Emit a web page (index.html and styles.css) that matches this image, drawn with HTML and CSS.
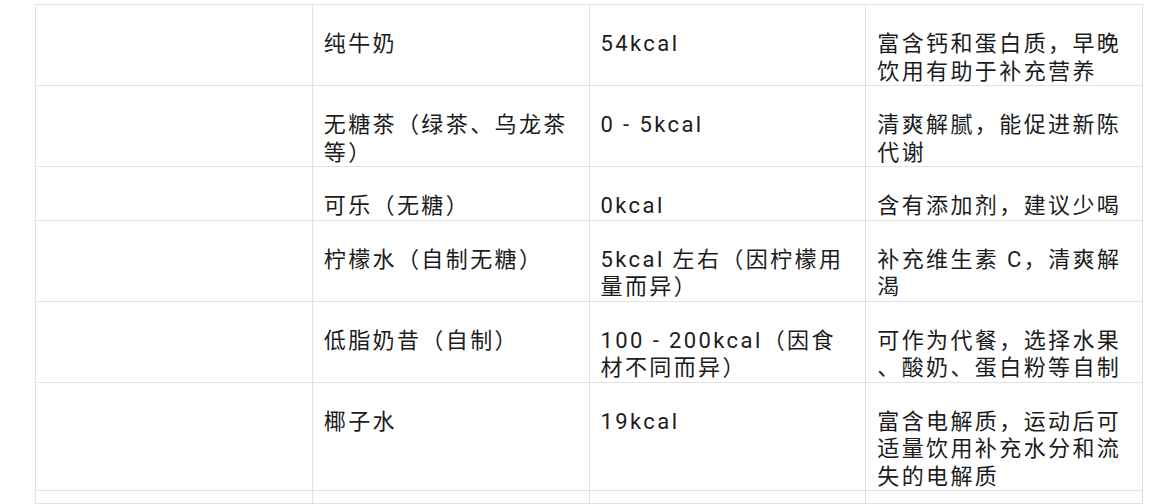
FILE: index.html
```html
<!DOCTYPE html>
<html lang="zh-CN">
<head>
<meta charset="utf-8">
<title>饮品热量表</title>
<link rel="stylesheet" href="styles.css">
</head>
<body>
<div class="wrap">
<table class="drinks">
<colgroup><col><col><col><col></colgroup>
<tbody>
<tr><td></td><td>纯牛奶</td><td>54kcal</td><td>富含钙和蛋白质，早晚饮用有助于补充营养</td></tr>
<tr><td></td><td>无糖茶（绿茶、乌龙茶等）</td><td>0 - 5kcal</td><td>清爽解腻，能促进新陈代谢</td></tr>
<tr><td></td><td>可乐（无糖）</td><td>0kcal</td><td>含有添加剂，建议少喝</td></tr>
<tr><td></td><td>柠檬水（自制无糖）</td><td>5kcal 左右（因柠檬用量而异）</td><td>补充维生素 C，清爽解渴</td></tr>
<tr><td></td><td>低脂奶昔（自制）</td><td>100 - 200kcal（因食材不同而异）</td><td>可作为代餐，选择水果、酸奶、蛋白粉等自制</td></tr>
<tr><td></td><td>椰子水</td><td>19kcal</td><td>富含电解质，运动后可适量饮用补充水分和流失的电解质</td></tr>
<tr class="tail"><td></td><td></td><td></td><td></td></tr>
</tbody>
</table>
</div>
</body>
</html>
```
FILE: styles.css
```css
html, body {
  margin: 0;
  padding: 0;
  background: #ffffff;
}
body {
  font-family: Roboto, "Noto Sans CJK SC", sans-serif;
  color: #1c1c1c;
  overflow: hidden;
  height: 504px;
}
.wrap {
  padding: 4px 0 0 35px;
}
.drinks {
  border-collapse: collapse;
  table-layout: fixed;
  width: 1108px;
}
.drinks td {
  border: 1px solid #e2e2e2;
  padding: 25px 13px 0 11px;
  vertical-align: top;
  font-size: 22px;
  letter-spacing: 2.4px;
  line-height: 27.5px;
  word-break: break-all;
  line-break: anywhere;
}
.drinks tr.tail td {
  padding: 0;
  height: 12px;
}
```
